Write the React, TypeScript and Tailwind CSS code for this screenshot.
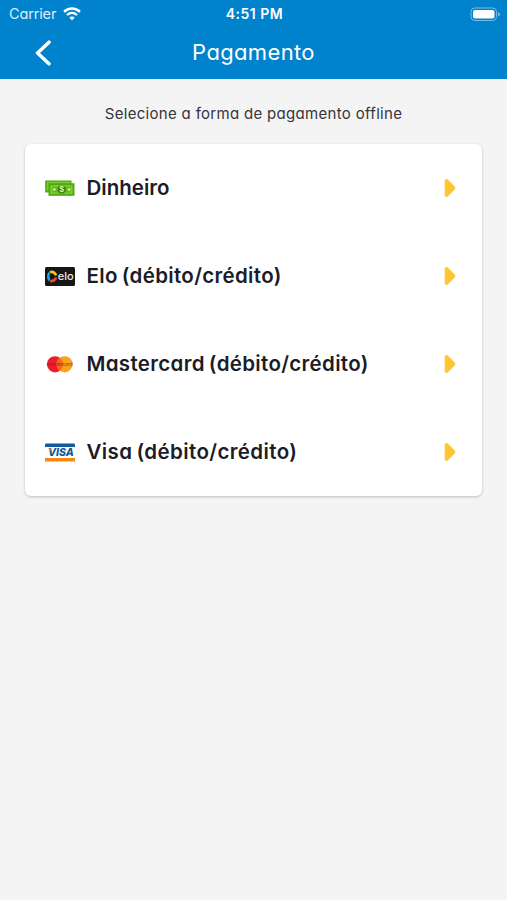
import React from "react";

interface PaymentMethod {
  id: string;
  label: string;
  tracking: string;
  icon: React.ReactNode;
}

const CashIcon = () => (
  <svg width="30" height="17" viewBox="0 0 30 17">
    <rect x="0.2" y="0.5" width="26.3" height="12" fill="#4faa0c" />
    <rect x="1.8" y="1.8" width="23.4" height="9" fill="#7cc832" />
    <rect x="3.5" y="3.2" width="26" height="12.6" fill="#4faa0c" />
    <rect x="5.5" y="5.2" width="22" height="8.6" fill="#86cf3c" />
    <rect x="7.2" y="6.5" width="18.6" height="6" fill="#62b821" />
    <circle cx="16.7" cy="9.5" r="4" fill="#318207" />
    <text
      x="16.7"
      y="12.2"
      fontSize="7.5"
      fontWeight="700"
      textAnchor="middle"
      fill="#d5f3a9"
    >
      $
    </text>
    <circle cx="9.4" cy="9.5" r="1.3" fill="#d5f3a9" />
    <circle cx="24" cy="9.5" r="1.3" fill="#d5f3a9" />
  </svg>
);

const EloIcon = () => (
  <svg width="30" height="19" viewBox="0 0 30 19">
    <rect width="30" height="19" rx="1.5" fill="#161616" />
    <path
      d="M5 5.2A4.5 4.5 0 0 1 11 8.6"
      fill="none"
      stroke="#f8c51c"
      strokeWidth="2.6"
    />
    <path d="M3.6 4.4Q0.4 9.5 3.6 14.4L5.2 12.2Q3.6 9.5 5.2 6.6z" fill="#18a5df" />
    <path
      d="M11 10.4A4.5 4.5 0 0 1 5 13.8"
      fill="none"
      stroke="#ee4b2b"
      strokeWidth="2.6"
    />
    <text
      x="12.8"
      y="13"
      fontSize="10.5"
      fontWeight="500"
      textLength="16"
      lengthAdjust="spacingAndGlyphs"
      fill="#e8e8e8"
    >
      elo
    </text>
  </svg>
);

const MastercardIcon = () => (
  <svg width="30" height="19" viewBox="0 0 30 19" className="overflow-visible">
    <circle cx="10" cy="9.3" r="8.1" fill="#ed1c2e" />
    <circle cx="19.6" cy="9.3" r="8.1" fill="#fba21f" />
    <path d="M14.8 2.8a8.1 8.1 0 0 1 0 13a8.1 8.1 0 0 1 0-13z" fill="#f26a1b" />
    <text
      x="14.8"
      y="11"
      fontSize="4.6"
      fontWeight="600"
      textAnchor="middle"
      fill="#7a2a20"
      fillOpacity="0.75"
    >
      mastercard
    </text>
  </svg>
);

const VisaIcon = () => (
  <svg width="30" height="19" viewBox="0 0 30 19">
    <path d="M0 4V1.6Q0 0.4 1.2 0.4H28.8Q30 0.4 30 1.6V4z" fill="#12599f" />
    <path d="M0 15V17.4Q0 18.6 1.2 18.6H28.8Q30 18.6 30 17.4V15z" fill="#f5860f" />
    <text
      x="3"
      y="13.4"
      fontSize="10.8"
      fontWeight="800"
      fontStyle="italic"
      textLength="25.8"
      lengthAdjust="spacingAndGlyphs"
      fill="#12599f"
    >
      VISA
    </text>
    <path d="M2.8 5.6H6.2L7.2 9.2Q5.8 6.7 2.8 5.6z" fill="#f5860f" />
  </svg>
);

const methods: PaymentMethod[] = [
  { id: "cash", label: "Dinheiro", tracking: "tracking-normal", icon: <CashIcon /> },
  { id: "elo", label: "Elo (débito/crédito)", tracking: "tracking-[0.33px]", icon: <EloIcon /> },
  {
    id: "mastercard",
    label: "Mastercard (débito/crédito)",
    tracking: "tracking-[0.33px]",
    icon: <MastercardIcon />,
  },
  { id: "visa", label: "Visa (débito/crédito)", tracking: "tracking-[0.39px]", icon: <VisaIcon /> },
];

const StatusBar = () => (
  <div className="grid h-7 grid-cols-3 items-center pl-[9px] pr-1.5 text-sm">
    <div className="flex items-center gap-[7px]">
      <span className="text-[14.5px] tracking-[-0.15px] text-white/85">Carrier</span>
      <svg width="18" height="14" viewBox="0 0 18 14" fill="none" stroke="#fff">
        <path d="M1 4.8C5.6 0.4 12.4 0.4 17 4.8" strokeWidth="2.4" />
        <path d="M4 8C6.9 5.3 11.1 5.3 14 8" strokeWidth="2.3" />
        <path d="M9 13.4L6.3 10.6Q9 8.5 11.7 10.6z" fill="#fff" stroke="none" />
      </svg>
    </div>
    <span className="-ml-px text-center text-[14px] font-semibold tracking-[0.5px]">4:51 PM</span>
    <svg className="justify-self-end" width="31" height="15" viewBox="0 0 31 15">
      <rect x="1" y="1" width="25.5" height="12.5" rx="3.8" fill="none" stroke="#75bdea" />
      <rect x="3" y="3" width="21.5" height="8.5" rx="2" fill="#fff" />
      <path d="M28 5v4.6q2-.8 2-2.3t-2-2.3z" fill="#75bdea" />
    </svg>
  </div>
);

const Header = () => (
  <header className="h-[79px] bg-[#0082cd] text-white">
    <StatusBar />
    <div className="grid h-12 grid-cols-3 items-center">
      <button type="button" aria-label="Voltar" className="ml-[34px] mt-px w-fit">
        <svg width="18" height="26" viewBox="0 0 18 26" fill="none">
          <path
            d="M15 2.2L3.5 13L15 23.8"
            stroke="#fff"
            strokeWidth="3.5"
            strokeLinecap="round"
            strokeLinejoin="round"
          />
        </svg>
      </button>
      <h1 className="text-center text-[22px] tracking-[0.35px]">Pagamento</h1>
    </div>
  </header>
);

const PaymentRow = ({ method }: { method: PaymentMethod }) => (
  <li>
    <button type="button" className="flex h-[88px] w-full items-center pl-5 pr-[26px] text-left">
      {method.icon}
      <span
        className={`ml-[11.5px] flex-1 whitespace-nowrap text-[20.5px] font-semibold [word-spacing:-1.5px] ${method.tracking}`}
      >
        {method.label}
      </span>
      <svg width="13" height="20" viewBox="0 0 13 20">
        <path
          d="M2.2 2.4Q2.2 1.5 3.6 1.6L5 2.2L11.4 8.8Q12.4 10 11.4 11.2L5 17.8L3.6 18.4Q2.2 18.5 2.2 17.6z"
          fill="#fdc536"
          stroke="#fdc536"
          strokeLinejoin="round"
        />
      </svg>
    </button>
  </li>
);

const App: React.FC = () => {
  return (
    <div className="min-h-screen bg-[#f4f4f4] font-['Inter','Liberation_Sans',sans-serif] text-[#1b1c27] [font-feature-settings:'cv11']">
      <Header />
      <main className="px-[25px] pt-6">
        <p className="mb-[19px] text-center text-[15px] leading-[22px] tracking-[0.31px] text-[#34343c]">
          Selecione a forma de pagamento offline
        </p>
        <ul className="rounded-md bg-white shadow-[0_1px_3px_rgba(0,0,0,0.22)]">
          {methods.map((method) => (
            <PaymentRow key={method.id} method={method} />
          ))}
        </ul>
      </main>
    </div>
  );
};

export default App;
